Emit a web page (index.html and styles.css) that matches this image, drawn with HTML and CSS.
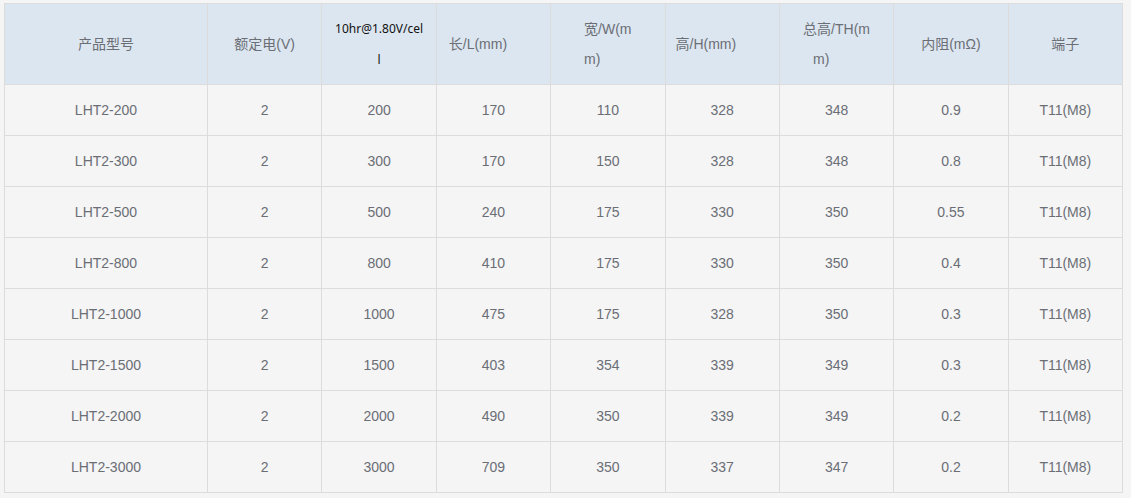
FILE: index.html
```html
<!DOCTYPE html>
<html lang="zh-CN">
<head>
<meta charset="utf-8">
<title>LHT2 系列参数表</title>
<link rel="stylesheet" href="styles.css">
</head>
<body>
<div class="wrap">
<table class="spec">
  <colgroup>
    <col class="c-first">
    <col><col><col><col><col><col><col><col>
  </colgroup>
  <thead>
    <tr>
      <th>产品型号</th>
      <th>额定电(V)</th>
      <th class="cap"><span class="cap-txt">10hr@1.80V/cel<br>l</span></th>
      <th class="left"><span class="pl13">长/L(mm)</span></th>
      <th><span class="blk">宽/W(m<br>m)</span></th>
      <th class="left"><span class="pl11">高/H(mm)</span></th>
      <th><span class="blk">总高/TH(m<br><span class="ind">m)</span></span></th>
      <th>内阻(mΩ)</th>
      <th>端子</th>
    </tr>
  </thead>
  <tbody>
    <tr><td>LHT2-200</td><td>2</td><td>200</td><td>170</td><td>110</td><td>328</td><td>348</td><td>0.9</td><td>T11(M8)</td></tr>
    <tr><td>LHT2-300</td><td>2</td><td>300</td><td>170</td><td>150</td><td>328</td><td>348</td><td>0.8</td><td>T11(M8)</td></tr>
    <tr><td>LHT2-500</td><td>2</td><td>500</td><td>240</td><td>175</td><td>330</td><td>350</td><td>0.55</td><td>T11(M8)</td></tr>
    <tr><td>LHT2-800</td><td>2</td><td>800</td><td>410</td><td>175</td><td>330</td><td>350</td><td>0.4</td><td>T11(M8)</td></tr>
    <tr><td>LHT2-1000</td><td>2</td><td>1000</td><td>475</td><td>175</td><td>328</td><td>350</td><td>0.3</td><td>T11(M8)</td></tr>
    <tr><td>LHT2-1500</td><td>2</td><td>1500</td><td>403</td><td>354</td><td>339</td><td>349</td><td>0.3</td><td>T11(M8)</td></tr>
    <tr><td>LHT2-2000</td><td>2</td><td>2000</td><td>490</td><td>350</td><td>339</td><td>349</td><td>0.2</td><td>T11(M8)</td></tr>
    <tr><td>LHT2-3000</td><td>2</td><td>3000</td><td>709</td><td>350</td><td>337</td><td>347</td><td>0.2</td><td>T11(M8)</td></tr>
  </tbody>
</table>
</div>
</body>
</html>
```
FILE: styles.css
```css
html, body {
  margin: 0;
  padding: 0;
  background: #f5f5f5;
}
.wrap {
  padding: 3px 0 0 4px;
}
.spec {
  border-collapse: collapse;
  table-layout: fixed;
  width: 1119px;
  border: 1px solid #dcdcdc;
  font-family: "Liberation Sans", Arial, "Noto Sans CJK SC", sans-serif;
  font-size: 14px;
  color: #6b6e75;
}
.c-first { width: 203px; }
.spec th, .spec td {
  border: 1px solid #dcdcdc;
  padding: 0;
  text-align: center;
  vertical-align: middle;
  font-weight: normal;
}
.spec thead tr { height: 81px; }
.spec thead th {
  background: #dce6f0;
  line-height: 30px;
}
.spec tbody tr { height: 51px; }
.spec tbody td {
  background: #f5f5f5;
  line-height: 20px;
}
.spec th.left { text-align: left; }
.pl13 { padding-left: 12px; }
.pl11 { padding-left: 10px; }
.blk {
  display: inline-block;
  text-align: left;
}
.ind { padding-left: 10px; }
.cap-txt {
  color: #111;
  font-family: "Noto Sans", "Liberation Sans", sans-serif;
  font-size: 12px;
}
```
